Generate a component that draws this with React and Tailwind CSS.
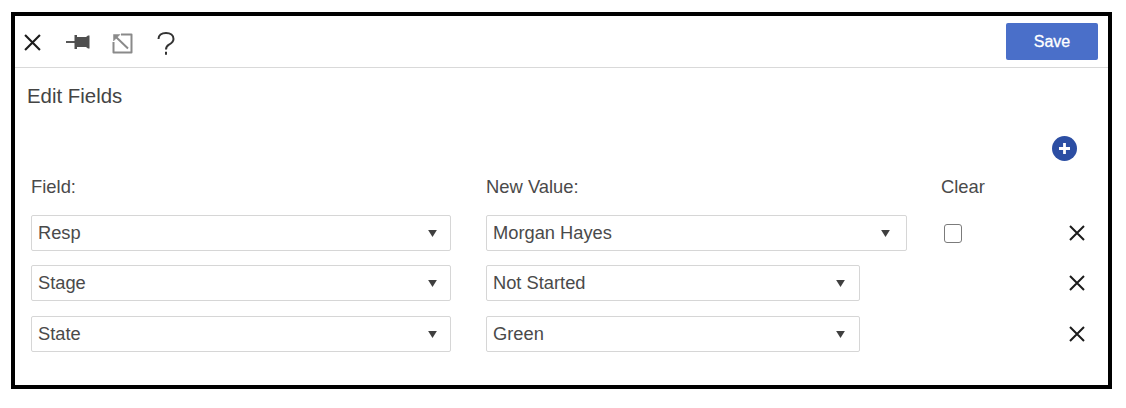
const font = { fontFamily: '"Liberation Sans", Arial, sans-serif' };

function Close({ className }) {
  return (
    <svg viewBox="0 0 16 16" className={className} fill="none" stroke="#1c1c1c" strokeWidth="2">
      <path d="M1 1 15 15M15 1 1 15" />
    </svg>
  );
}

function Select({ value, className }) {
  return (
    <div className={`flex h-[36px] items-center justify-between rounded-[2px] border border-[#d6d6d6] bg-white pl-[6px] text-[18.3px] text-[#4a4a4a] ${className}`}>
      <span>{value}</span>
      <svg viewBox="0 0 10 8" className="h-[7px] w-[9px]"><path d="M0 0h10L5 8z" fill="#3f3f3f" /></svg>
    </div>
  );
}

function Row({ field, value, width, className, clear }) {
  return (
    <div className={`flex items-center ${className}`}>
      <Select value={field} className="w-[420px] pr-[13px]" />
      <Select value={value} className={`ml-[35px] ${width}`} />
      {clear && <div className="ml-[37px] h-[19px] w-[18px] rounded-[3px] border border-[#7b7b7b] bg-white" />}
      <Close className="ml-auto mr-[7px] h-[16px] w-[16px]" />
    </div>
  );
}

export default function App() {
  return (
    <div className="h-[408px] w-[1126px] bg-white pl-[11px] pt-3" style={font}>
      <div className="flex h-[377px] w-[1101px] flex-col border-4 border-black bg-white">
        <div className="flex h-[52px] items-center border-b border-[#d9d9d9] pl-[9px] pr-[10px]">
          <div className="mt-[2px] flex items-center">
            <Close className="h-[17px] w-[17px]" />
            <svg viewBox="0 0 24 16" className="ml-[25px] -mt-[2px] h-[16px] w-[24px]">
              <path d="M0 8h10" stroke="#444" strokeWidth="1.8" />
              <path d="M8.5 1h2.5v2h9l2-1.5h1.5v13H22L20 13h-9v2H8.5z" fill="#4f4f4f" />
            </svg>
            <svg viewBox="0 0 21 21" className="ml-[22px] mt-[1px] h-[21px] w-[21px]" fill="none" stroke="#8a8a8a" strokeLinejoin="round">
              <path d="M9 1.5H19.5V19.5H1.5V9" strokeWidth="2" />
              <path d="M4 4 16 15.5" strokeWidth="2" />
              <path d="M1.5 8V1.5H8z" fill="#8a8a8a" strokeWidth="0.5" />
            </svg>
            <svg viewBox="0 0 18 23" className="ml-[24px] mt-[2px] h-[23px] w-[18px]" fill="none" stroke="#333" strokeWidth="2">
              <path d="M1.5 7C1.5 3.2 4.5 1 9 1s7.5 2.4 7.5 6c0 3-2.2 4.4-4.5 5.6C10 13.7 9 14.6 9 17.5" />
              <path d="M9 19.8v3" />
            </svg>
          </div>
          <button className="ml-auto h-[37px] w-[92px] rounded-[2px] bg-[#4a6fc9] text-[16px] text-white [-webkit-text-stroke:0.3px_white]">Save</button>
        </div>
        <div className="flex flex-1 flex-col pl-[16px] pr-[16px]">
          <div className="-ml-[4px] mt-[15px] text-[20.4px] leading-[26px] text-[#444]">Edit Fields</div>
          <div className="mt-[27px] flex justify-end">
            <svg viewBox="0 0 25 25" className="mr-[15px] h-[25px] w-[25px]">
              <circle cx="12.5" cy="12.5" r="12.5" fill="#2c4ea3" />
              <path d="M12.5 7v11M7 12.5h11" stroke="#fff" strokeWidth="2.8" />
            </svg>
          </div>
          <div className="mt-[14px] flex text-[18.4px] leading-[24px] text-[#4a4a4a]">
            <span className="w-[455px]">Field:</span>
            <span className="w-[455px]">New Value:</span>
            <span>Clear</span>
          </div>
          <Row className="mt-[16px]" field="Resp" value="Morgan Hayes" width="w-[421px] pr-[16px]" clear />
          <Row className="mt-[14px]" field="Stage" value="Not Started" width="w-[374px] pr-[14px]" />
          <Row className="mt-[15px]" field="State" value="Green" width="w-[374px] pr-[14px]" />
        </div>
      </div>
    </div>
  );
}
